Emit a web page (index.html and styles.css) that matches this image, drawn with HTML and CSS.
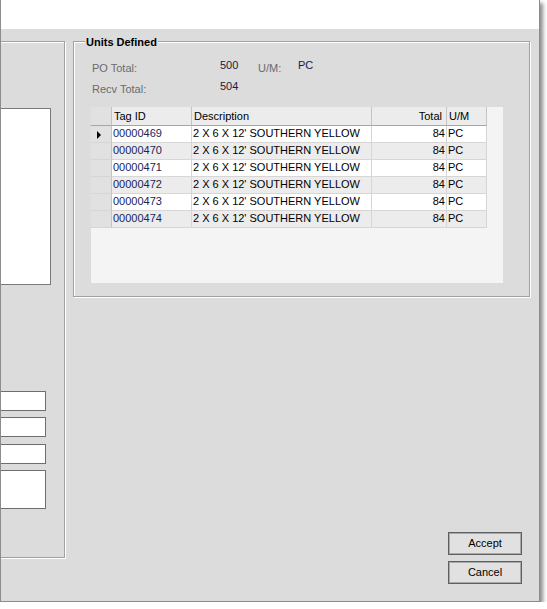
FILE: index.html
```html
<!DOCTYPE html>
<html lang="en">
<head>
<meta charset="utf-8">
<title>Units Defined</title>
<link rel="stylesheet" href="styles.css">
</head>
<body>
<div class="window">
  <div class="topbar"></div>
  <div class="client">
    <div class="group left-group">
      <div class="listbox"></div>
      <div class="field field-1"></div>
      <div class="field field-2"></div>
      <div class="field field-3"></div>
      <div class="field memo"></div>
    </div>
    <div class="right-col">
      <section class="group units">
        <h2 class="group-title">Units Defined</h2>
        <div class="summary">
          <span class="lbl">PO Total:</span><span class="val">500</span><span class="lbl">U/M:</span><span class="val">PC</span>
          <span class="lbl">Recv Total:</span><span class="val">504</span><span></span><span></span>
        </div>
        <div class="grid">
          <div class="row head">
            <div class="cell rh"></div>
            <div class="cell">Tag ID</div>
            <div class="cell">Description</div>
            <div class="cell num">Total</div>
            <div class="cell">U/M</div>
          </div>
          <div class="row">
            <div class="cell rh"><span class="cur"></span></div>
            <div class="cell tag">00000469</div>
            <div class="cell">2 X 6 X 12' SOUTHERN YELLOW</div>
            <div class="cell num">84</div>
            <div class="cell">PC</div>
          </div>
          <div class="row alt">
            <div class="cell rh"></div>
            <div class="cell tag">00000470</div>
            <div class="cell">2 X 6 X 12' SOUTHERN YELLOW</div>
            <div class="cell num">84</div>
            <div class="cell">PC</div>
          </div>
          <div class="row">
            <div class="cell rh"></div>
            <div class="cell tag">00000471</div>
            <div class="cell">2 X 6 X 12' SOUTHERN YELLOW</div>
            <div class="cell num">84</div>
            <div class="cell">PC</div>
          </div>
          <div class="row alt">
            <div class="cell rh"></div>
            <div class="cell tag">00000472</div>
            <div class="cell">2 X 6 X 12' SOUTHERN YELLOW</div>
            <div class="cell num">84</div>
            <div class="cell">PC</div>
          </div>
          <div class="row">
            <div class="cell rh"></div>
            <div class="cell tag">00000473</div>
            <div class="cell">2 X 6 X 12' SOUTHERN YELLOW</div>
            <div class="cell num">84</div>
            <div class="cell">PC</div>
          </div>
          <div class="row alt">
            <div class="cell rh"></div>
            <div class="cell tag">00000474</div>
            <div class="cell">2 X 6 X 12' SOUTHERN YELLOW</div>
            <div class="cell num">84</div>
            <div class="cell">PC</div>
          </div>
        </div>
      </section>
      <div class="buttons">
        <button class="btn">Accept</button>
        <button class="btn">Cancel</button>
      </div>
    </div>
  </div>
</div>
</body>
</html>
```
FILE: styles.css
```css
* { box-sizing: border-box; }
html, body { margin: 0; background: #fff; }
body {
  font-family: "Liberation Sans", Arial, sans-serif;
  font-size: 11px;
  color: #000;
}
.window {
  width: 540px;
  height: 602px;
  border: 1px solid #8c8c8c;
  border-top: 0;
  background: #dcdcdc;
  box-shadow: 3px 3px 4px rgba(0, 0, 0, 0.45);
  display: flex;
  flex-direction: column;
}
.topbar { height: 29px; flex: none; background: #fff; }
.client {
  flex: 1;
  display: flex;
  padding: 12px 9px 0 0;
  overflow: hidden;
}
.group {
  border: 1px solid #a0a0a0;
  box-shadow: 1px 1px 0 #fff, inset 1px 1px 0 #fff;
}
.left-group {
  flex: none;
  margin-left: -20px;
  width: 84px;
  height: 517px;
  padding-right: 13px;
  display: flex;
  flex-direction: column;
  align-items: flex-end;
}
.listbox {
  margin-top: 66px;
  width: 60px;
  height: 177px;
  background: #fff;
  border: 1px solid #7a7a7a;
}
.field {
  width: 60px;
  height: 20px;
  margin-right: 5px;
  background: #fff;
  border: 1px solid #6e6e6e;
}
.field-1 { margin-top: 106px; }
.field-2 { margin-top: 6px; }
.field-3 { margin-top: 7px; }
.memo { margin-top: 6px; height: 39px; }

.right-col {
  flex: 1;
  margin-left: 8px;
  display: flex;
  flex-direction: column;
  justify-content: space-between;
}
.units {
  position: relative;
  height: 256px;
  padding: 17px 0 0 18px;
}
.group-title {
  position: absolute;
  top: -6px;
  left: 11px;
  margin: 0;
  padding: 0 1px;
  font-size: 11px;
  line-height: 13px;
  font-weight: bold;
  background: #dcdcdc;
}
.summary {
  display: grid;
  grid-template-columns: 128px 38px 40px 1fr;
  grid-auto-rows: 21px;
  line-height: 13px;
}
.lbl { padding-top: 3px; color: #6b6b6b; }
.val { color: #1a1a3c; }

.grid {
  margin-top: 6px;
  margin-left: -1px;
  width: 412px;
  height: 176px;
  background: #f4f4f4;
}
.row {
  display: grid;
  grid-template-columns: 21px 80px 180px 75px 40px;
  width: 396px;
  background: #fff;
}
.row.alt { background: #ececec; }
.cell {
  height: 17px;
  line-height: 15px;
  padding-left: 1px;
  border-right: 1px solid #d6d6d6;
  border-bottom: 1px solid #d6d6d6;
  white-space: nowrap;
  overflow: hidden;
}
.cell.num { text-align: right; padding-right: 1px; }
.cell.tag { color: #1b2558; }
.cell.rh {
  background: #e1e1e1;
  border-right-color: #c4c4c4;
  display: flex;
  align-items: center;
  padding-left: 6px;
}
.cur {
  width: 0;
  height: 0;
  margin-top: 2px;
  border-left: 4px solid #000;
  border-top: 4px solid transparent;
  border-bottom: 4px solid transparent;
}
.row.head { background: #ececec; }
.head .cell {
  height: 19px;
  line-height: 18px;
  padding-left: 2px;
  border-right-color: #c4c4c4;
  border-bottom-color: #a6a6a6;
  color: #000;
}
.head .cell.num { padding-right: 4px; }

.buttons {
  display: flex;
  flex-direction: column;
  align-items: flex-end;
  gap: 6px;
  padding: 0 8px 17px 0;
}
.btn {
  width: 74px;
  height: 23px;
  margin: 0;
  padding: 0 0 1px;
  font-family: "Liberation Sans", Arial, sans-serif;
  font-size: 11px;
  color: #000;
  background: #e1e1e1;
  border: 1px solid #5f5f5f;
  box-shadow: inset 0 0 0 1px #a9a9a9;
  border-radius: 0;
}
```
